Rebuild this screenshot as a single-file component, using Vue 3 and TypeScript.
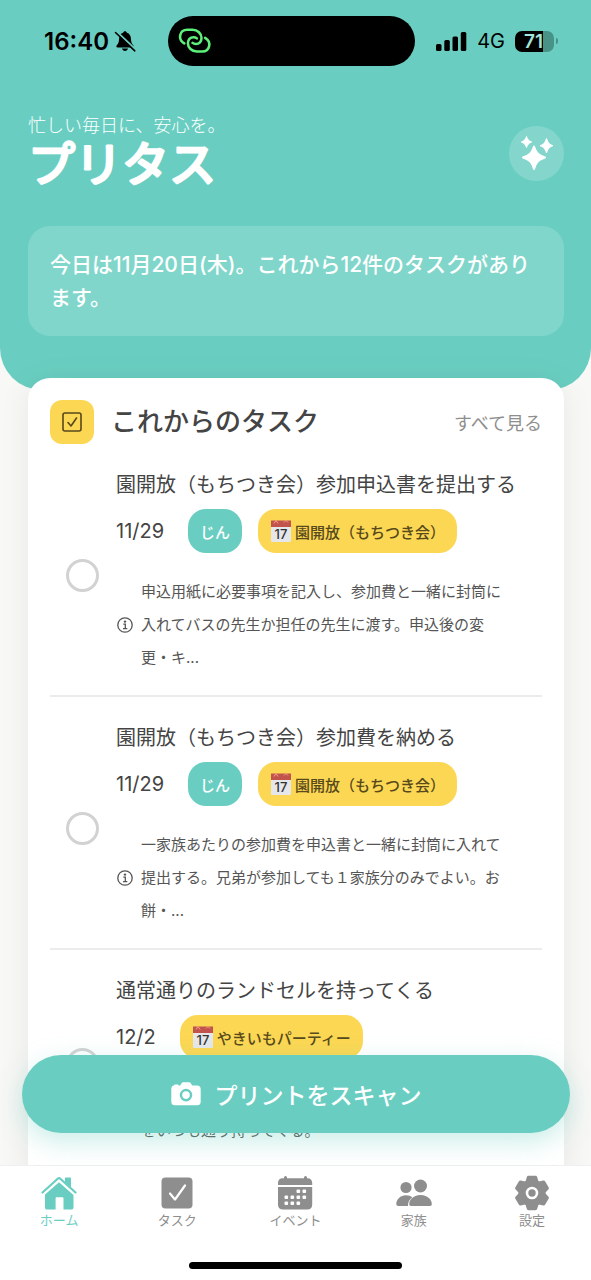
<script setup lang="ts">
interface Task {
  id: number
  title: string
  date: string
  child?: string
  event: string
  note: string
}

interface Tab {
  key: string
  label: string
}

const tasks: Task[] = [
  {
    id: 1,
    title: '園開放（もちつき会）参加申込書を提出する',
    date: '11/29',
    child: 'じん',
    event: '園開放（もちつき会）',
    note: '申込用紙に必要事項を記入し、参加費と一緒に封筒に入れてバスの先生か担任の先生に渡す。申込後の変更・キ...',
  },
  {
    id: 2,
    title: '園開放（もちつき会）参加費を納める',
    date: '11/29',
    child: 'じん',
    event: '園開放（もちつき会）',
    note: '一家族あたりの参加費を申込書と一緒に封筒に入れて提出する。兄弟が参加しても１家族分のみでよい。お餅・...',
  },
  {
    id: 3,
    title: '通常通りのランドセルを持ってくる',
    date: '12/2',
    event: 'やきいもパーティー',
    note: 'をいつも通り持ってくる。',
  },
]

const tabs: Tab[] = [
  { key: 'home', label: 'ホーム' },
  { key: 'tasks', label: 'タスク' },
  { key: 'events', label: 'イベント' },
  { key: 'family', label: '家族' },
  { key: 'settings', label: '設定' },
]

const teeth = [0, 60, 120, 180, 240, 300]
const dots = [
  [19, 15], [25, 15],
  [7, 21], [13, 21], [19, 21], [25, 21],
  [7, 27], [13, 27], [19, 27],
]
</script>

<template>
  <div class="app">
    <div class="scroll">
      <header class="hero">
        <div class="status">
          <div class="status-left">
            <span class="time">16:40</span>
            <svg class="bell" viewBox="0 0 22 22" aria-hidden="true">
              <path d="M11 1.2c1 0 1.700.6 1.900 1.500 2.600.8 3.900 3 4 5.900.1 3.600.9 5.200 2.300 6.700.5.500.6 1 .4 1.400-.2.500-.6.700-1.200.7H3.600c-.6 0-1-.2-1.200-.7-.2-.5 0-1 .4-1.400 1.500-1.500 2.200-3.100 2.300-6.700.1-3 1.400-5.100 4-5.900C9.300 1.800 10 1.200 11 1.200z" />
              <path d="M8 18.600h6c-.4 1.500-1.500 2.300-3 2.300s-2.600-.8-3-2.300z" />
              <path d="M2.200 1.200L21.500 19.500" stroke="#69cec1" stroke-width="2" />
              <path d="M1.500 2.500L20.800 20.800" stroke="#000" stroke-width="1.600" stroke-linecap="round" />
            </svg>
          </div>
          <div class="island">
            <svg viewBox="0 0 35 28" aria-hidden="true">
              <g fill="none" stroke="#5df07a" stroke-width="2.600" stroke-linecap="round">
                <path id="loop" d="M6.500 16.500C3 14.500 1.600 11 2.400 7.700 3.200 4.200 6 2.400 9.500 2.400H15c5.200 0 9.200 4 9.200 8.600 0 3.500-2.300 6-5.700 6-1.500 0-2.700-.4-3.500-1.100" />
                <use href="#loop" transform="rotate(180 17.200 13.600)" />
              </g>
            </svg>
          </div>
          <div class="status-right">
            <svg class="signal" viewBox="0 0 31 19" aria-hidden="true">
              <rect x="0" y="12" width="5.500" height="7" rx="1.500" />
              <rect x="8.300" y="8" width="5.500" height="11" rx="1.500" />
              <rect x="16.500" y="4.500" width="5.500" height="14.500" rx="1.500" />
              <rect x="24.800" y="0" width="5.500" height="19" rx="1.500" />
            </svg>
            <span class="carrier">4G</span>
            <span class="battery"><span class="level">71</span></span>
          </div>
        </div>

        <div class="brand">
          <div>
            <p class="tagline">忙しい毎日に、安心を。</p>
            <h1 class="logo">
              <svg viewBox="0 0 192 52"><text x="0" y="42">プリタス</text></svg>
            </h1>
          </div>
          <button class="magic" type="button" aria-label="AI">
            <svg viewBox="0 0 34 36" aria-hidden="true">
              <g fill="#fff" stroke="#fff" stroke-linejoin="round">
                <path stroke-width="2" d="M14 11.500c2 6.500 4 8.500 11 11-7 2.500-9 4.500-11 11.500-2-7-4-9-11-11.500 7-2.500 9-4.500 11-11z" />
                <path stroke-width="1" d="M6.500 1.500c1.200 3.300 2.200 4.300 5.200 5.500-3 1.200-4 2.200-5.200 5.500C5.300 9.200 4.300 8.200 1.300 7 4.300 5.800 5.300 4.800 6.500 1.500z" />
                <path stroke-width="1" d="M26.500 3.500c1.500 4.400 2.700 5.700 6.500 7.200-3.800 1.500-5 2.800-6.500 7.300-1.500-4.500-2.700-5.800-6.500-7.300 3.800-1.500 5-2.800 6.500-7.200z" />
              </g>
            </svg>
          </button>
        </div>

        <p class="summary">今日は11月20日(木)。これから12件のタスクがあります。</p>
      </header>

      <main class="card">
        <div class="card-head">
          <span class="card-icon">
            <svg viewBox="0 0 22 22" aria-hidden="true">
              <g fill="none" stroke="#57491b" stroke-width="1.600" stroke-linecap="round" stroke-linejoin="round">
                <rect x="2" y="2" width="18" height="18" rx="2" />
                <path d="M7 11.500l3 3.500 5.500-8" />
              </g>
            </svg>
          </span>
          <h2>これからのタスク</h2>
          <a href="#tasks">すべて見る</a>
        </div>

        <ul class="tasks">
          <li v-for="task in tasks" :key="task.id" class="task">
            <div class="check">
              <input :id="`task-${task.id}`" type="checkbox" />
            </div>
            <div class="body">
              <label class="title" :for="`task-${task.id}`">{{ task.title }}</label>
              <div class="meta">
                <time>{{ task.date }}</time>
                <div class="chips">
                  <span v-if="task.child" class="chip child">{{ task.child }}</span>
                  <span class="chip event">
                    <svg viewBox="0 0 22 24" aria-hidden="true">
                      <rect x="1" y="3" width="20" height="20" rx="1" fill="#e6e7ea" />
                      <path d="M1 1.500h20V8H1z" fill="#c2524c" />
                      <path d="M4 4.500l2-3 2 3M14 3.500l2-2 2 2" fill="none" stroke="#f0a08c" stroke-width="1" />
                      <text x="11" y="19.500" text-anchor="middle">17</text>
                    </svg>
                    {{ task.event }}
                  </span>
                </div>
              </div>
              <div class="note">
                <svg viewBox="0 0 16 16" aria-hidden="true">
                  <circle cx="8" cy="8" r="7.200" fill="none" stroke="#555" stroke-width="1.300" />
                  <circle cx="8" cy="4.600" r="1.200" fill="#555" />
                  <path d="M6.300 7.200H8.300V11.600M6 11.700h4.300" fill="none" stroke="#555" stroke-width="1.300" />
                </svg>
                <p>{{ task.note }}</p>
              </div>
            </div>
          </li>
        </ul>
      </main>
    </div>

    <div class="dock">
      <button class="scan" type="button">
        <svg viewBox="0 0 30 24" aria-hidden="true">
          <path fill="#fff" fill-rule="evenodd" d="M3 3.500C3 2.800 3.500 2.400 4.200 2.400h2.400c.6 0 1 .4 1.100 1h1.500l1.200-1.900C11 .6 11.700.2 12.700.2h5c1 0 1.700.4 2.300 1.300l1.200 1.900h4.800c2.300 0 3.700 1.300 3.700 3.600v12.700c0 2.400-1.300 3.600-3.700 3.600H4c-2.400 0-3.700-1.200-3.700-3.600V7C.3 5 1.300 3.700 3 3.500zM15 6.800a6.300 6.300 0 100 12.600 6.300 6.300 0 000-12.600zm0 2.500a3.800 3.800 0 110 7.600 3.800 3.800 0 010-7.600z" />
        </svg>
        プリントをスキャン
      </button>
      <nav class="tabs">
        <a v-for="tab in tabs" :key="tab.key" :href="`#${tab.key}`" :class="{ active: tab.key === 'home' }">
          <svg v-if="tab.key === 'home'" viewBox="0 0 36 36" aria-hidden="true">
            <path d="M4 19.500L18 7.200 32.500 20v12.200c0 1.500-.8 2.300-2.300 2.300H22.500V23.500c0-.8-.4-1.200-1.200-1.200h-5.500c-.8 0-1.200.4-1.200 1.200v11H6.200C4.700 34.500 4 33.700 4 32.200z" />
            <path d="M1.500 17.500L16.700 3.700c.9-.8 1.700-.8 2.600 0L34.500 17.500" fill="none" stroke="currentColor" stroke-width="2.200" stroke-linecap="round" />
            <path d="M24.500 2.500h4.500c.6 0 1 .4 1 1v9l-6-5.500v-4c0-.3.200-.5.500-.5z" />
          </svg>
          <svg v-else-if="tab.key === 'tasks'" viewBox="0 0 36 36" aria-hidden="true">
            <rect x="2.500" y="2.500" width="31" height="31" rx="4" />
            <path d="M11 18.500l5 6 10-14" fill="none" stroke="#fff" stroke-width="2.200" stroke-linecap="round" stroke-linejoin="round" />
          </svg>
          <svg v-else-if="tab.key === 'events'" viewBox="0 0 36 36" aria-hidden="true">
            <path d="M1 10V8c0-3 1.700-4.700 4.700-4.700H7V2.500a1.500 1.500 0 013 0v.8h17v-.8a1.500 1.500 0 013 0v.8h.5c3 0 4.700 1.700 4.700 4.700v2z" />
            <path d="M1 12h34.200v17.500c0 3.300-1.700 5-5 5H6c-3.300 0-5-1.700-5-5z" />
            <g fill="#fff">
              <rect v-for="(d, i) in dots" :key="i" :x="d[0] + 0.5" :y="d[1] - 0.5" width="3.600" height="3.600" rx="1" />
            </g>
          </svg>
          <svg v-else-if="tab.key === 'family'" viewBox="0 0 36 36" aria-hidden="true">
            <circle cx="10" cy="12.500" r="5.600" />
            <circle cx="24.500" cy="11" r="6.500" />
            <path d="M12 31H2.500C1 31 .3 30.300.3 29c0-4.500 4-8.700 9.700-8.700 2.700 0 4.800.8 6.300 2C13.500 24.500 11.700 27.500 12 31z" />
            <path d="M15.200 31c-1.500 0-2-.7-2-2 0-3.500 3.500-9 11.300-9s11.300 5.500 11.300 9c0 1.300-.5 2-2 2z" />
          </svg>
          <svg v-else viewBox="0 0 36 36" aria-hidden="true">
            <circle cx="18" cy="18" r="13.500" />
            <path v-for="a in teeth" :key="a" :transform="`rotate(${a} 18 18)`" d="M11 8l1.800-5.800c.3-1 .9-1.400 1.800-1.400h6.800c.9 0 1.500.4 1.800 1.400L25 8z" />
            <circle cx="18" cy="18" r="5" fill="none" stroke="#fff" stroke-width="2.600" />
          </svg>
          <span>{{ tab.label }}</span>
        </a>
      </nav>
      <div class="home-bar"></div>
    </div>
  </div>
</template>

<style>
body {
  margin: 0;
  background: #f8f8f6;
}
</style>

<style scoped>
.app {
  display: flex;
  flex-direction: column;
  height: 100vh;
  overflow: hidden;
  background: #f8f8f6;
  color: #444;
  font-family: Inter, "Noto Sans CJK JP", sans-serif;
}

.app * {
  box-sizing: border-box;
}

h1,
h2,
p,
ul {
  margin: 0;
  padding: 0;
}

button {
  border: 0;
  font-family: inherit;
}

a {
  color: inherit;
  text-decoration: none;
}

svg {
  display: block;
  flex: none;
}

.scroll {
  flex: 1;
  min-height: 0;
  overflow: hidden;
}

.hero {
  padding: 16px 27px 54px 28px;
  border-radius: 0 0 42px 42px;
  background: #69cec1;
  color: #fff;
}

.status {
  display: grid;
  grid-template-columns: 1fr 247px 1fr;
  align-items: center;
  height: 50px;
  margin-right: 10px;
  color: #000;
}

.status-left {
  display: flex;
  align-items: center;
  gap: 5px;
  padding-left: 16px;
}

.time {
  font-size: 24px;
  font-weight: 600;
}

.bell {
  width: 22px;
  height: 22px;
}

.island {
  display: flex;
  align-items: center;
  height: 50px;
  padding-left: 10px;
  border-radius: 25px;
  background: #000;
}

.island svg {
  width: 34px;
  height: 28px;
}

.status-right {
  display: flex;
  align-items: center;
  justify-content: flex-end;
  gap: 10px;
}

.signal {
  width: 31px;
  height: 19px;
}

.carrier {
  font-size: 20px;
}

.battery {
  display: flex;
  position: relative;
  align-items: center;
  width: 39px;
  height: 21px;
  border-radius: 7px;
  background: linear-gradient(90deg, #000 71%, #489288 71%);
  color: #a5e6dc;
  font-size: 19px;
  font-weight: 600;
}

.battery::after {
  position: absolute;
  right: -4px;
  width: 2px;
  height: 6px;
  border-radius: 0 3px 3px 0;
  background: #489288;
  content: "";
}

.level {
  padding-left: 9px;
}

.brand {
  display: flex;
  align-items: center;
  justify-content: space-between;
  margin: 48px 0 34px;
}

.tagline {
  font-size: 18px;
  font-weight: 300;
  line-height: 24px;
}

.logo svg {
  width: 192px;
  height: 54px;
  overflow: visible;
}

.logo text {
  fill: #fff;
  stroke: #fff;
  stroke-linejoin: round;
  stroke-width: 3px;
  font-size: 47px;
  font-weight: 400;
}

.magic {
  display: grid;
  width: 55px;
  height: 55px;
  padding: 0;
  border-radius: 50%;
  background: rgba(255, 255, 255, 0.18);
  place-items: center;
}

.magic svg {
  width: 34px;
  height: 36px;
}

.summary {
  padding: 22px;
  border-radius: 22px;
  background: rgba(255, 255, 255, 0.16);
  font-size: 21px;
  font-weight: 500;
  line-height: 33px;
}

.card {
  margin: -12px 27px 0 28px;
  padding: 22px;
  border-radius: 22px;
  background: #fff;
  box-shadow: 0 4px 32px rgba(0, 0, 0, 0.07);
}

.card-head {
  display: flex;
  align-items: center;
}

.card-icon {
  display: grid;
  width: 44px;
  height: 44px;
  border-radius: 12px;
  background: #fcd753;
  place-items: center;
}

.card-icon svg {
  width: 22px;
  height: 22px;
}

h2 {
  flex: 1;
  margin-left: 17px;
  font-size: 26px;
  font-weight: 500;
  line-height: 44px;
}

.card-head a {
  color: #8e8e8e;
  font-size: 18px;
}

.tasks {
  list-style: none;
}

.task {
  display: flex;
  padding: 24px 0 21px;
  border-bottom: 2px solid #ececec;
}

.check {
  display: flex;
  align-items: center;
  width: 66px;
  padding: 8px 0 0 16px;
}

.check input {
  width: 33px;
  height: 33px;
  margin: 0;
  border: 3px solid #d2d2d2;
  border-radius: 50%;
  appearance: none;
}

.body {
  flex: 1;
}

.title {
  display: block;
  font-size: 20px;
  line-height: 34px;
}

.meta {
  display: flex;
  align-items: center;
  gap: 24px;
  margin: 7px 0 22px;
  font-size: 20px;
}

.chips {
  display: flex;
  gap: 16px;
}

.chip {
  display: flex;
  align-items: center;
  gap: 3px;
  height: 44px;
  padding: 0 12px;
  border-radius: 18px;
  font-size: 15px;
  font-weight: 500;
}

.child {
  background: #69cec1;
  color: #fff;
}

.event {
  background: #fcd753;
  color: #57491b;
}

.event svg {
  width: 22px;
  height: 24px;
}

.event text {
  fill: #333;
  font-size: 13px;
  font-weight: 500;
}

.note {
  display: flex;
  align-items: center;
  gap: 8px;
  min-height: 66px;
  padding: 0 30px 0 1px;
  color: #555;
}

.note svg {
  width: 16px;
  height: 16px;
}

.note p {
  align-self: flex-end;
  font-size: 15px;
  line-height: 33px;
}

.dock {
  position: relative;
  padding: 9px 0 11px;
  background: #fff;
  box-shadow: 0 -1px 0 #eef0f0;
}

.scan {
  display: flex;
  position: absolute;
  right: 21px;
  bottom: calc(100% + 33px);
  left: 22px;
  align-items: center;
  justify-content: center;
  gap: 14px;
  height: 78px;
  border-radius: 39px;
  background: #69cec1;
  box-shadow: 0 9px 26px rgba(105, 206, 193, 0.35);
  color: #fff;
  font-size: 23px;
  font-weight: 500;
}

.scan svg {
  width: 30px;
  height: 24px;
}

.tabs {
  display: grid;
  grid-template-columns: repeat(5, 1fr);
  margin-bottom: 33px;
  color: #8e8e8e;
}

.tabs a {
  display: flex;
  flex-direction: column;
  align-items: center;
  font-size: 13px;
  line-height: 18px;
}

.tabs a.active {
  color: #69cec1;
}

.tabs svg {
  width: 36px;
  height: 36px;
  fill: currentColor;
}

.home-bar {
  width: 36%;
  height: 7px;
  margin: 0 auto;
  border-radius: 4px;
  background: #000;
}
</style>
